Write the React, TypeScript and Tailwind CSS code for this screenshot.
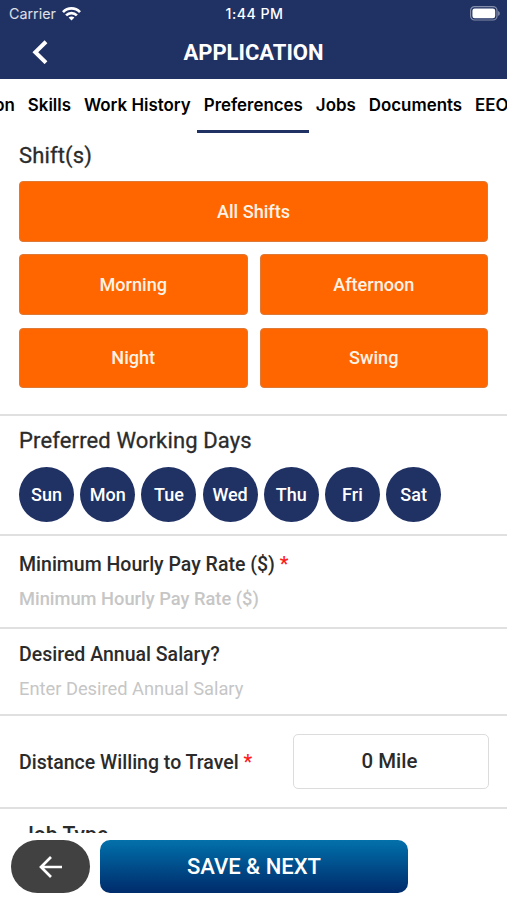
import React from 'react';

interface FieldProps {
  label: string;
  placeholder: string;
  required?: boolean;
  className: string;
  hintClass: string;
}

const tabs = ['Education', 'Skills', 'Work History', 'Preferences', 'Jobs', 'Documents', 'EEO'];
const shifts = ['Morning', 'Afternoon', 'Night', 'Swing'];
const days = ['Sun', 'Mon', 'Tue', 'Wed', 'Thu', 'Fri', 'Sat'];

const StatusBar: React.FC = () => (
  <div className="grid grid-cols-3 items-center h-[27px] pl-[9px] pr-[7px] font-['Inter',sans-serif]">
    <div className="flex items-center gap-[6px] text-[14.3px] text-white/85">
      <span>Carrier</span>
      <svg width="19" height="14" viewBox="0 0 19 14" fill="none" stroke="#fff" strokeWidth="2.7">
        <path d="M1 5.1C5.8.2 13.2.2 18 5.1" />
        <path d="M4.1 8.4c3.1-3.1 7.7-3.1 10.8 0" />
        <path d="M9.5 13.6l-2.9-3c1.6-1.5 4.2-1.5 5.8 0z" fill="#fff" stroke="none" />
      </svg>
    </div>
    <span className="text-center text-[14.2px] font-medium tracking-[0.45px] text-white">1:44 PM</span>
    <svg className="justify-self-end" width="30" height="15" viewBox="0 0 30 15">
      <rect x=".6" y=".6" width="26.4" height="13.4" rx="4" fill="none" stroke="#fff" strokeOpacity=".45" strokeWidth="1.2" />
      <rect x="2.4" y="2.4" width="22.8" height="9.8" rx="2.3" fill="#fff" />
      <path d="M28.2 5c2 .8 2 4 0 4.8z" fill="#fff" fillOpacity=".5" />
    </svg>
  </div>
);

const Field: React.FC<FieldProps> = ({ label, placeholder, required = false, className, hintClass }) => (
  <section className={`border-b-2 border-[#e0e0e0] px-[19px] ${className}`}>
    <label className="block text-[19.5px] leading-6 font-medium text-[#2b2b2b]">
      {label} {required && <span className="text-[#ff1a1a]">*</span>}
    </label>
    <p className={`mt-[10px] leading-6 text-[#c6c6c6] ${hintClass}`}>{placeholder}</p>
  </section>
);

const App: React.FC = () => {
  return (
    <div className="flex flex-col w-[507px] h-[900px] overflow-hidden bg-white font-['Roboto',sans-serif]">
      <header className="h-[79px] shrink-0 bg-[#203164] text-white">
        <StatusBar />
        <div className="grid grid-cols-[60px_1fr_60px] items-center h-[50px]">
          <button className="pl-[32px]" aria-label="Back">
            <svg width="17" height="24" viewBox="0 0 17 24" fill="none" stroke="#fff" strokeWidth="4">
              <path d="M14 1.7L3.3 12.2 14 22.7" />
            </svg>
          </button>
          <h1 className="text-center text-[22px] font-bold">APPLICATION</h1>
        </div>
      </header>

      <nav className="flex justify-end h-[54px] w-[515px] shrink-0 font-['Inter',sans-serif] text-[16.9px] font-semibold text-black">
        {tabs.map((tab) => (
          <a
            key={tab}
            className={`px-[6.5px] pt-[14px] whitespace-nowrap leading-6 ${tab === 'Preferences' ? 'border-b-[3px] border-[#203164]' : ''}`}
          >
            {tab}
          </a>
        ))}
      </nav>

      <main className="h-[700px] shrink-0 overflow-hidden">
        <section className="h-[283px] border-b-2 border-[#e0e0e0] px-[19px] pt-[9px]">
          <h2 className="text-[22px] leading-7 tracking-[0.14px] text-[#2b2b2b] [-webkit-text-stroke:0.3px_#2b2b2b]">Shift(s)</h2>
          <div className="mt-[11px] grid grid-cols-2 gap-x-[12px] gap-y-[12.75px] text-[18.1px] font-medium text-[#fff3e6]">
            <button className="col-span-2 h-[60.5px] rounded-[4px] border border-[#dd7a38] bg-[#ff6600]">All Shifts</button>
            {shifts.map((shift) => (
              <button key={shift} className="h-[60.5px] rounded-[4px] border border-[#dd7a38] bg-[#ff6600]">{shift}</button>
            ))}
          </div>
        </section>

        <section className="h-[119.5px] border-b-2 border-[#e0e0e0] px-[19px] pt-[11px]">
          <h2 className="text-[22px] leading-7 tracking-[0.14px] text-[#2b2b2b] [-webkit-text-stroke:0.3px_#2b2b2b]">Preferred Working Days</h2>
          <div className="mt-[12px] flex gap-[6.2px]">
            {days.map((day) => (
              <button key={day} className="size-[55px] rounded-full bg-[#203164] text-[18px] font-medium text-white">
                {day}
              </button>
            ))}
          </div>
        </section>

        <Field
          label="Minimum Hourly Pay Rate ($)"
          placeholder="Minimum Hourly Pay Rate ($)"
          required
          className="h-[93px] pt-[17px]"
          hintClass="text-[18.3px] font-medium"
        />
        <Field
          label="Desired Annual Salary?"
          placeholder="Enter Desired Annual Salary"
          className="h-[87.5px] pt-[14px]"
          hintClass="text-[18.3px]"
        />

        <section className="flex items-center justify-between h-[93px] border-b-2 border-[#e0e0e0] pl-[19px] pr-[18px]">
          <label className="pt-[2px] text-[19.5px] font-medium text-[#2b2b2b]">
            Distance Willing to Travel <span className="text-[#ff1a1a]">*</span>
          </label>
          <button className="h-[55px] w-[196px] rounded-[5px] border border-[#dcdcdc] pr-[3px] text-[20.4px] font-medium text-[#2b2b2b]">
            0 Mile
          </button>
        </section>

        <section className="px-[22px] pt-[12px]">
          <h2 className="text-[21.2px] leading-7 font-medium text-[#2b2b2b]">Job Type</h2>
        </section>
      </main>

      <footer className="flex gap-[10px] pl-[11px] pt-[7px]">
        <button className="flex h-[53px] w-[79px] items-center justify-center rounded-full bg-[#414141]" aria-label="Previous step">
          <svg width="24" height="22" viewBox="0 0 24 22" fill="none" stroke="#fff" strokeWidth="2.7">
            <path d="M23 11H2.5M12 1L2 11l10 10" />
          </svg>
        </button>
        <button className="h-[53px] w-[308px] rounded-[10px] bg-linear-to-b from-[#0471ab] to-[#002b6b] text-[22px] font-medium text-white">
          SAVE & NEXT
        </button>
      </footer>
    </div>
  );
};

export default App;
